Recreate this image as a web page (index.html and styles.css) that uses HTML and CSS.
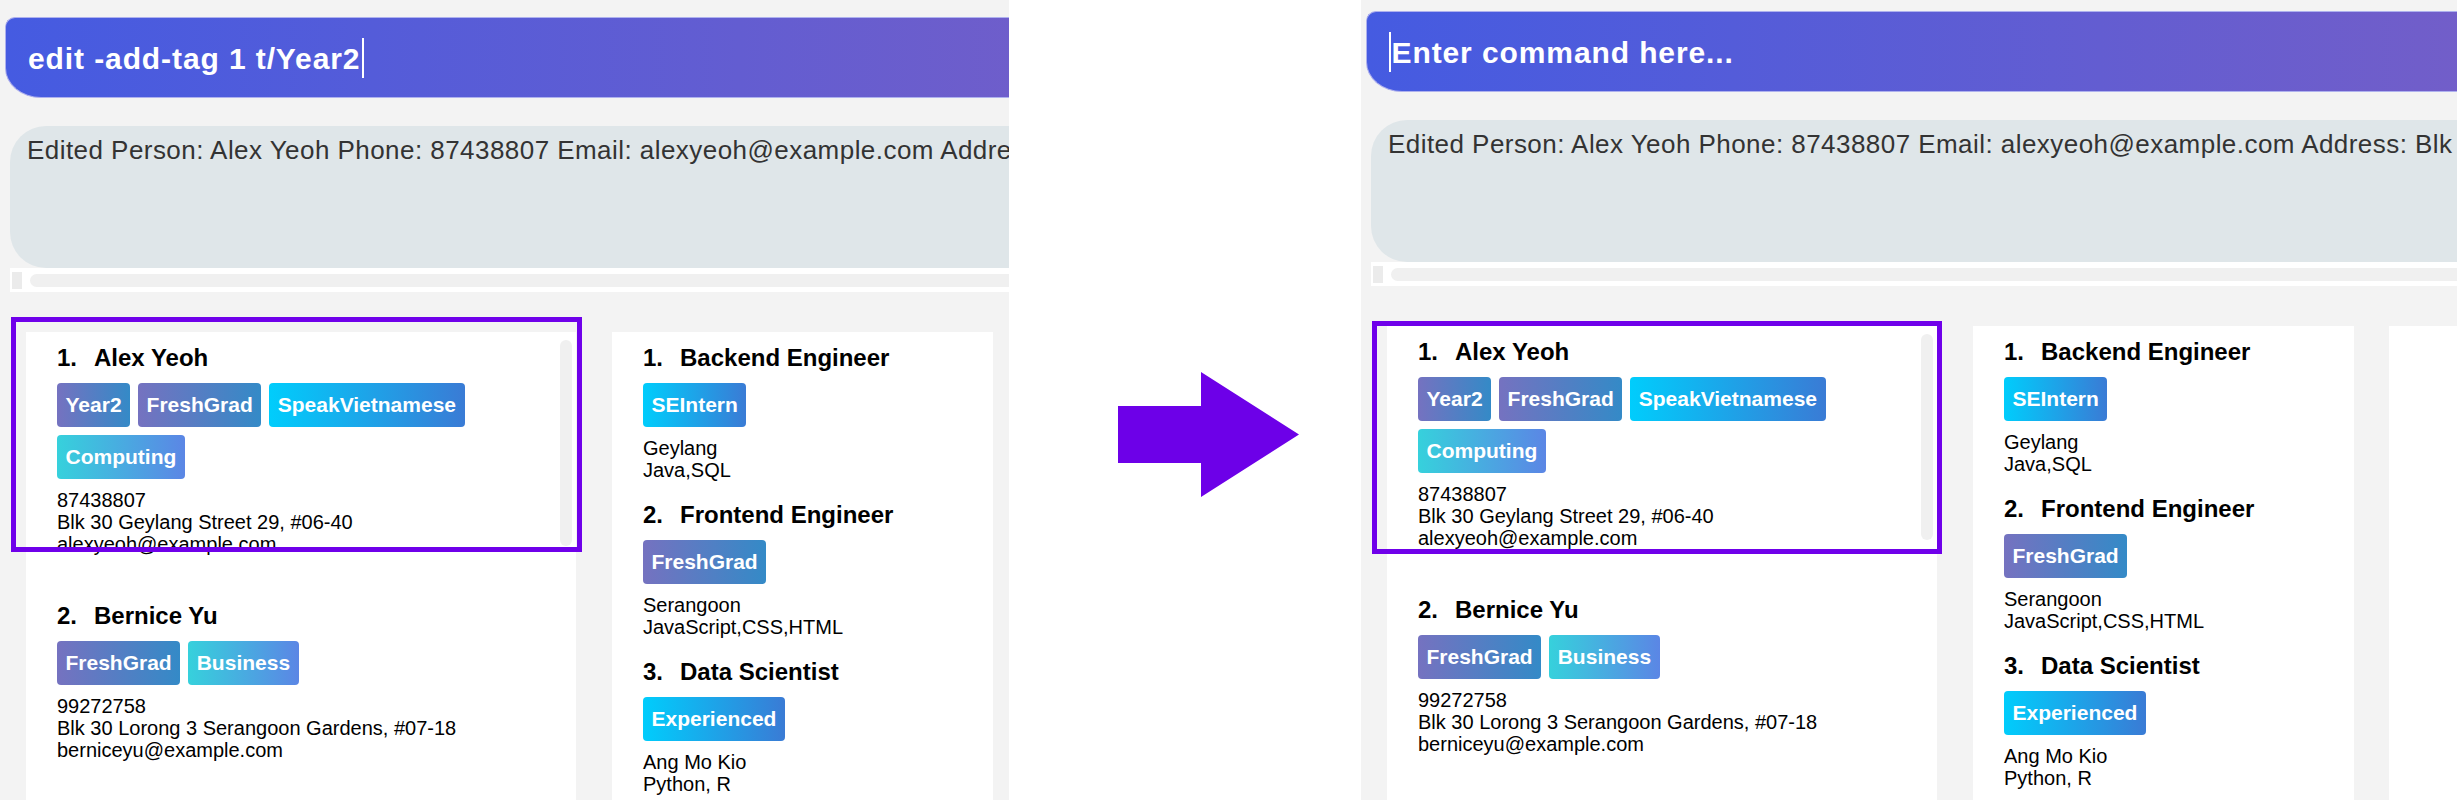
FILE: index.html
```html
<!DOCTYPE html>
<html lang="en">
<head>
<meta charset="utf-8">
<title>Edit add tag</title>
<link rel="stylesheet" href="styles.css">
</head>
<body>
<div class="page">
  <section class="panel panel-left">
    <div class="command"><span class="command-text">edit -add-tag 1 t/Year2</span><span class="caret caret-after"></span></div>
    <div class="result">Edited Person: Alex Yeoh Phone: 87438807 Email: alexyeoh@example.com Address: Blk 30 Geylang Street</div>
    <div class="hscroll"><span class="hscroll-btn"></span><span class="hscroll-thumb"></span></div>
    <div class="lists">
      <div class="list list-person">
        <div class="cell cell-person">
          <div class="name"><span class="num">1.</span>Alex Yeoh</div>
          <div class="tags"><span class="tag tag-violet">Year2</span><span class="tag tag-violet">FreshGrad</span><span class="tag tag-reef">SpeakVietnamese</span><span class="tag tag-scooter">Computing</span></div>
          <div class="details">87438807<br>Blk 30 Geylang Street 29, #06-40<br>alexyeoh@example.com</div>
          <span class="vscroll"></span>
        </div>
        <div class="cell cell-person">
          <div class="name"><span class="num">2.</span>Bernice Yu</div>
          <div class="tags"><span class="tag tag-violet">FreshGrad</span><span class="tag tag-scooter">Business</span></div>
          <div class="details">99272758<br>Blk 30 Lorong 3 Serangoon Gardens, #07-18<br>berniceyu@example.com</div>
        </div>
      </div>
      <div class="list list-job">
        <div class="cell cell-job">
          <div class="name"><span class="num">1.</span>Backend Engineer</div>
          <div class="tags"><span class="tag tag-reef">SEIntern</span></div>
          <div class="details">Geylang<br>Java,SQL</div>
        </div>
        <div class="cell cell-job">
          <div class="name"><span class="num">2.</span>Frontend Engineer</div>
          <div class="tags"><span class="tag tag-violet">FreshGrad</span></div>
          <div class="details">Serangoon<br>JavaScript,CSS,HTML</div>
        </div>
        <div class="cell cell-job">
          <div class="name"><span class="num">3.</span>Data Scientist</div>
          <div class="tags"><span class="tag tag-reef">Experienced</span></div>
          <div class="details">Ang Mo Kio<br>Python, R</div>
        </div>
      </div>
      <div class="list list-extra"></div>
    </div>
    <div class="highlight highlight-left"></div>
  </section>

  <div class="between">
    <svg class="arrow" width="181" height="125" viewBox="0 0 181 125" aria-hidden="true">
      <polygon points="0,34 83,34 83,0 181,62.5 83,125 83,91 0,91" fill="#6d00e8"/>
    </svg>
  </div>

  <section class="panel panel-right">
    <div class="command"><span class="caret caret-before"></span><span class="command-text">Enter command here...</span></div>
    <div class="result">Edited Person: Alex Yeoh Phone: 87438807 Email: alexyeoh@example.com Address: Blk 30 Geylang Street 29, #06-40 Tags: [Year2][FreshGrad][SpeakVietnamese][Computing]</div>
    <div class="hscroll"><span class="hscroll-btn"></span><span class="hscroll-thumb"></span></div>
    <div class="lists">
      <div class="list list-person">
        <div class="cell cell-person">
          <div class="name"><span class="num">1.</span>Alex Yeoh</div>
          <div class="tags"><span class="tag tag-violet">Year2</span><span class="tag tag-violet">FreshGrad</span><span class="tag tag-reef">SpeakVietnamese</span><span class="tag tag-scooter">Computing</span></div>
          <div class="details">87438807<br>Blk 30 Geylang Street 29, #06-40<br>alexyeoh@example.com</div>
          <span class="vscroll"></span>
        </div>
        <div class="cell cell-person">
          <div class="name"><span class="num">2.</span>Bernice Yu</div>
          <div class="tags"><span class="tag tag-violet">FreshGrad</span><span class="tag tag-scooter">Business</span></div>
          <div class="details">99272758<br>Blk 30 Lorong 3 Serangoon Gardens, #07-18<br>berniceyu@example.com</div>
        </div>
      </div>
      <div class="list list-job">
        <div class="cell cell-job">
          <div class="name"><span class="num">1.</span>Backend Engineer</div>
          <div class="tags"><span class="tag tag-reef">SEIntern</span></div>
          <div class="details">Geylang<br>Java,SQL</div>
        </div>
        <div class="cell cell-job">
          <div class="name"><span class="num">2.</span>Frontend Engineer</div>
          <div class="tags"><span class="tag tag-violet">FreshGrad</span></div>
          <div class="details">Serangoon<br>JavaScript,CSS,HTML</div>
        </div>
        <div class="cell cell-job">
          <div class="name"><span class="num">3.</span>Data Scientist</div>
          <div class="tags"><span class="tag tag-reef">Experienced</span></div>
          <div class="details">Ang Mo Kio<br>Python, R</div>
        </div>
      </div>
      <div class="list list-extra"></div>
    </div>
    <div class="highlight highlight-right"></div>
  </section>
</div>
</body>
</html>
```

FILE: styles.css
```css
* {
  box-sizing: border-box;
}

html, body {
  margin: 0;
  padding: 0;
  background: #ffffff;
}

body {
  font-family: "Liberation Sans", Arial, Helvetica, sans-serif;
  color: #000;
}

.page {
  display: flex;
  width: 2457px;
  height: 800px;
  overflow: hidden;
}

.panel {
  position: relative;
  display: flex;
  flex-direction: column;
  height: 800px;
  overflow: hidden;
  background: #f3f3f3;
  padding-top: 11px;
}

.panel-left {
  width: 1009px;
  flex: 0 0 1009px;
  padding-top: 17px;
}

.panel-right {
  flex: 1 1 auto;
  min-width: 0;
}

.between {
  flex: 0 0 352px;
  padding: 372px 0 0 109px;
  background: #ffffff;
}

.arrow {
  display: block;
}

/* command box */
.command {
  flex: 0 0 auto;
  display: flex;
  align-items: center;
  width: calc(100% - 5px);
  height: 81px;
  margin-left: 5px;
  padding: 2px 0 0 22px;
  border: 1px solid #aeb1ee;
  border-right: 0;
  border-radius: 10px 0 0 36px / 10px 0 0 30px;
  background: linear-gradient(to right, #455be1, #725ec9) left top / 1100px 100% no-repeat;
  background-color: #725ec9;
  color: #ffffff;
  font-size: 30px;
  font-weight: bold;
  letter-spacing: 0.9px;
  white-space: nowrap;
  overflow: hidden;
}

.caret {
  display: inline-block;
  width: 1.5px;
  height: 40px;
  background: #ffffff;
}

.caret-after {
  margin-left: 2px;
  margin-top: -2px;
}

.caret-before {
  margin-right: 1px;
  margin-top: -2px;
}

/* result box */
.result {
  flex: 0 0 auto;
  width: calc(100% - 10px);
  height: 142px;
  margin: 28px 0 0 10px;
  padding: 9px 0 0 17px;
  border-radius: 36px 0 0 36px;
  background: #dfe6e9;
  color: #333333;
  font-size: 26px;
  line-height: 30px;
  letter-spacing: 0.45px;
  white-space: nowrap;
  overflow: hidden;
}

.hscroll {
  flex: 0 0 auto;
  display: flex;
  align-items: center;
  width: calc(100% - 10px);
  height: 24px;
  margin-left: 10px;
  background: #ffffff;
}

.hscroll-btn {
  width: 10px;
  height: 17px;
  margin-left: 2px;
  background: #ebebeb;
}

.hscroll-thumb {
  flex: 1 1 auto;
  height: 13px;
  margin-left: 8px;
  border-radius: 7px 0 0 7px;
  background: #f0f0f0;
}

/* lists */
.lists {
  flex: 1 1 auto;
  display: flex;
  margin-top: 40px;
  min-height: 0;
}

.list {
  flex: 0 0 auto;
  background: #ffffff;
}

.list-person {
  width: 550px;
  margin-left: 26px;
}

.list-job {
  width: 381px;
  margin-left: 36px;
}

.list-extra {
  width: 400px;
  margin-left: 35px;
}

.cell {
  position: relative;
  padding-left: 31px;
}

.cell-person {
  padding-top: 12px;
  padding-bottom: 35px;
}

.cell-job {
  padding-top: 12px;
  padding-bottom: 8px;
}

.name {
  font-size: 24px;
  font-weight: bold;
  line-height: 28px;
  white-space: nowrap;
}

.num {
  display: inline-block;
  width: 37px;
}

.tags {
  display: flex;
  flex-wrap: wrap;
  gap: 8px;
  margin-top: 11px;
  max-width: 500px;
}

.tag {
  display: inline-block;
  height: 44px;
  padding: 0 8.5px;
  border-radius: 4px;
  color: #ffffff;
  font-size: 21px;
  font-weight: bold;
  line-height: 44px;
  white-space: nowrap;
}

.tag-violet {
  background: linear-gradient(to right, #7572c0, #348ac7);
}

.tag-reef {
  background: linear-gradient(to right, #00cdfc, #3a7bd5);
}

.tag-scooter {
  background: linear-gradient(to right, #36d1dc, #5b86e5);
}

.details {
  margin-top: 10px;
  font-size: 20px;
  line-height: 22px;
  white-space: nowrap;
}

.vscroll {
  position: absolute;
  left: 534px;
  top: 8px;
  width: 12px;
  height: 206px;
  border-radius: 6px;
  background: #f0f0f0;
}

/* annotation boxes */
.highlight {
  position: absolute;
  left: 11px;
  border: 5px solid #6f00ea;
  z-index: 2;
}

.highlight-left {
  top: 317px;
  width: 571px;
  height: 235px;
}

.highlight-right {
  top: 321px;
  width: 570px;
  height: 233px;
}
```
